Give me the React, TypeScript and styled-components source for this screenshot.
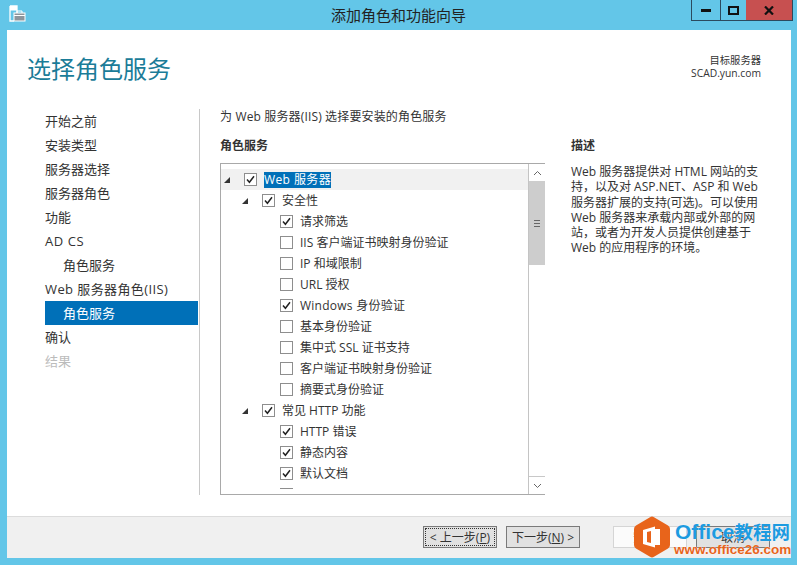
import styled, { createGlobalStyle } from "styled-components";

const cjk = `"Open Sans", "Noto Sans CJK SC", sans-serif`;

const GlobalStyle = createGlobalStyle`
    html, body {
        margin: 0;
        padding: 0;
        background: #63c6e8;
    }
    * {
        box-sizing: border-box;
    }
`;

const navItems = [
    { text: "开始之前" },
    { text: "安装类型" },
    { text: "服务器选择" },
    { text: "服务器角色" },
    { text: "功能" },
    { text: "AD CS", tracking: 0.6 },
    { text: "角色服务", sub: true },
    { text: "Web 服务器角色(IIS)", tracking: 0.4 },
    { text: "角色服务", sub: true, active: true },
    { text: "确认" },
    { text: "结果", disabled: true }
];

const treeRows = [
    { text: "Web 服务器", level: 0, parent: true, checked: true, selected: true, tracking: 0.4 },
    { text: "安全性", level: 1, parent: true, checked: true },
    { text: "请求筛选", level: 2, checked: true },
    { text: "IIS 客户端证书映射身份验证", level: 2 },
    { text: "IP 和域限制", level: 2 },
    { text: "URL 授权", level: 2 },
    { text: "Windows 身份验证", level: 2, checked: true, tracking: 0.25 },
    { text: "基本身份验证", level: 2 },
    { text: "集中式 SSL 证书支持", level: 2 },
    { text: "客户端证书映射身份验证", level: 2 },
    { text: "摘要式身份验证", level: 2 },
    { text: "常见 HTTP 功能", level: 1, parent: true, checked: true },
    { text: "HTTP 错误", level: 2, checked: true },
    { text: "静态内容", level: 2, checked: true },
    { text: "默认文档", level: 2, checked: true },
    // only the top edge of this box is still visible above the list's bottom
    { text: "", level: 2 }
];

const Page = styled.div`
    position: relative;
    width: 797px;
    height: 565px;
    overflow: hidden;
    display: flex;
    flex-direction: column;
    background: #63c6e8;
    font-family: ${cjk};
    color: #333;
`;

const TitleBar = styled.div`
    position: relative;
    height: 30px;
    flex: none;
    display: flex;
    justify-content: center;
    padding-top: 5px;
    font-size: 15px;
    line-height: 20px;
    color: #222;
`;

const AppIcon = styled.svg`
    position: absolute;
    left: 9px;
    top: 5px;
`;

const WindowControls = styled.div`
    position: absolute;
    right: 4px;
    top: 0;
    height: 21px;
    display: flex;
    border: 1px solid #2b4a5e;
    border-top: none;
`;

const ControlButton = styled.div<{ $width: number; $close?: boolean }>`
    width: ${(p) => p.$width}px;
    display: flex;
    align-items: center;
    justify-content: center;
    background: ${(p) => (p.$close ? "#c75050" : "transparent")};
    border-left: ${(p) => (p.$close ? "none" : "1px solid #2b4a5e")};

    &:first-child {
        border-left: none;
    }
`;

const Client = styled.div`
    flex: 1;
    min-height: 0;
    margin: 0 6px 7px 7px;
    display: flex;
    flex-direction: column;
    background: #fff;
`;

const Header = styled.div`
    height: 79px;
    flex: none;
    display: flex;
    justify-content: space-between;
    padding: 21px 30px 0 20px;
`;

const PageTitle = styled.h1`
    margin: 0;
    font-size: 24px;
    line-height: 36px;
    font-weight: 400;
    color: #1b7c98;
`;

const TargetServer = styled.div`
    margin-top: 3px;
    text-align: right;
    font-size: 10.3px;
    line-height: 13px;
    color: #333;
`;

const Body = styled.div`
    height: 386px;
    flex: none;
    display: flex;
`;

const Nav = styled.div`
    width: 193px;
    flex: none;
    padding: 0 1px 0 38px;
    border-right: 1px solid #c8c8c8;
    margin-right: 20px;
`;

const NavItem = styled.div<{ $sub?: boolean; $active?: boolean; $disabled?: boolean; $tracking?: number }>`
    height: 24px;
    line-height: 24px;
    font-size: 13px;
    white-space: nowrap;
    letter-spacing: ${(p) => p.$tracking ?? 0}px;
    padding-left: ${(p) => (p.$sub ? 18 : 0)}px;
    background: ${(p) => (p.$active ? "#0070b8" : "transparent")};
    color: ${(p) => (p.$active ? "#fff" : p.$disabled ? "#bcbcbc" : "#333")};
`;

const Main = styled.div`
    width: 325px;
    flex: none;
    font-size: 12px;
    margin-right: 26px;
`;

const Intro = styled.div`
    height: 24px;
    line-height: 16px;
    white-space: nowrap;
    letter-spacing: 0.15px;
`;

const SectionLabel = styled.div`
    height: 30px;
    line-height: 26px;
    font-weight: 700;
    font-size: 12px;
`;

const TreeBox = styled.div`
    height: 332px;
    display: flex;
    border: 1px solid #a9a9a9;
    background: #fff;
`;

const TreeList = styled.div`
    flex: none;
    width: 307px;
    height: 325px;
    overflow: hidden;
    padding-top: 5px;
`;

const TreeRow = styled.div<{ $level: number; $selected?: boolean }>`
    height: 21px;
    display: flex;
    align-items: center;
    padding-left: ${(p) => 3 + p.$level * 18}px;
    background: ${(p) => (p.$selected ? "#f1f1f1" : "transparent")};
    white-space: nowrap;
`;

const Expander = styled.svg`
    width: 6px;
    height: 6px;
    flex: none;
    margin-right: 14px;
`;

const ExpanderSpace = styled.div`
    width: 20px;
    flex: none;
`;

const CheckBox = styled.div`
    width: 13px;
    height: 13px;
    flex: none;
    border: 1px solid #8e8e8e;
    background: #fff;
    display: flex;
    align-items: center;
    justify-content: center;
    margin-right: 7px;
`;

const RowLabel = styled.span<{ $selected?: boolean; $tracking?: number }>`
    line-height: 16px;
    letter-spacing: ${(p) => p.$tracking ?? 0}px;
    background: ${(p) => (p.$selected ? "#0070b8" : "transparent")};
    color: ${(p) => (p.$selected ? "#fff" : "#333")};
`;

const ScrollBar = styled.div`
    width: 17px;
    flex: none;
    display: flex;
    flex-direction: column;
    background: #fff;
    border-left: 1px solid #c4c4c4;
`;

const ScrollButton = styled.div`
    height: 17px;
    flex: none;
    display: flex;
    align-items: center;
    justify-content: center;
    background: #fff;
`;

const ScrollTrack = styled.div`
    flex: 1;
    min-height: 0;
    border-bottom: 1px solid #c8c8c8;
`;

const ScrollThumb = styled.div`
    height: 84px;
    background: #cdcdcd;
    display: flex;
    align-items: center;
    justify-content: center;
`;

const Grip = styled.div`
    width: 6px;
    height: 7px;
    border-top: 1px solid #666;
    border-bottom: 1px solid #666;

    &::after {
        content: "";
        display: block;
        margin-top: 2px;
        height: 1px;
        background: #666;
    }
`;

const Aside = styled.div`
    flex: 1;
    min-width: 0;
    padding-right: 20px;
    font-size: 12px;
`;

const AsideText = styled.p`
    margin: 1px 0 0;
    line-height: 15.3px;
    color: #333;
`;

const Footer = styled.div`
    flex: 1;
    min-height: 0;
    margin-top: 21px;
    background: #f0f0f0;
    border-top: 1px solid #dcdcdc;
    display: flex;
    align-items: flex-start;
    padding: 9px 0 0 416px;
`;

const Button = styled.div<{ $focused?: boolean; $disabled?: boolean; $gap?: number }>`
    width: 74px;
    height: 22px;
    flex: none;
    margin-right: ${(p) => p.$gap ?? 9}px;
    display: flex;
    align-items: center;
    justify-content: center;
    font-size: 12px;
    white-space: pre;
    color: ${(p) => (p.$disabled ? "#999" : "#333")};
    background: ${(p) => (p.$disabled ? "#fbfbfb" : "#e1e1e1")};
    border: 1px solid ${(p) => (p.$disabled ? "#d5d5d5" : "#7a7a7a")};
    outline: ${(p) => (p.$focused ? "1px dotted #333" : "none")};
    outline-offset: -3px;

    u {
        text-underline-offset: 1px;
    }
`;

const Watermark = styled.div`
    position: absolute;
    left: 634px;
    top: 516px;
    display: flex;
    gap: 5px;
`;

const WatermarkText = styled.div`
    display: flex;
    flex-direction: column;
    font-family: "Liberation Sans", "Noto Sans CJK SC", sans-serif;
    font-weight: 700;
    white-space: nowrap;
`;

const BrandName = styled.div`
    margin-top: 5px;
    height: 22px;
    line-height: 22px;
    font-size: 21px;
    color: #1d9be0;
    text-shadow: 0 0 1px #fff;

    span {
        font-size: 18.5px;
    }
`;

const BrandUrl = styled.div`
    margin-left: -1px;
    height: 14px;
    line-height: 14px;
    font-size: 13.5px;
    color: #e8641b;
    text-shadow: 0 0 1px #fff;
`;

const CheckMark = () => (
    <svg width="9" height="9" viewBox="0 0 9 9">
        <path d="M1 4.5 L3.4 7.2 L8 1.2" fill="none" stroke="#222" strokeWidth="1.5" />
    </svg>
);

const Chevron = ({ up }: { up?: boolean }) => (
    <svg width="9" height="6" viewBox="0 0 9 6">
        <path d={up ? "M1 5 L4.5 1.5 L8 5" : "M1 1 L4.5 4.5 L8 1"} fill="none" stroke="#666" strokeWidth="1" />
    </svg>
);

const App = () => {
    return (
        <Page>
            <GlobalStyle />
            <TitleBar>
                <AppIcon width="17" height="17" viewBox="0 0 17 17">
                    <rect x="1" y="1" width="7" height="4.5" fill="#fff" />
                    <path d="M1 1 H8 V8 M1 1 V16 H5" fill="none" stroke="#fff" strokeWidth="1.3" />
                    <rect x="5" y="8" width="11" height="8" fill="#8d959c" stroke="#fff" />
                    <path d="M8 8 V6 H13 V8" fill="none" stroke="#fff" strokeWidth="1" />
                    <path d="M5 10.5 H16" stroke="#fff" strokeWidth="1" />
                </AppIcon>
                添加角色和功能向导
                <WindowControls>
                    <ControlButton $width={28}>
                        <svg width="10" height="4" viewBox="0 0 10 4">
                            <rect width="10" height="3" y="1" fill="#111" />
                        </svg>
                    </ControlButton>
                    <ControlButton $width={26}>
                        <svg width="11" height="9" viewBox="0 0 11 9">
                            <rect x="1" y="1" width="9" height="7" fill="none" stroke="#111" strokeWidth="2" />
                        </svg>
                    </ControlButton>
                    <ControlButton $width={46} $close>
                        <svg width="10" height="9" viewBox="0 0 10 9">
                            <path d="M1 0.5 L9 8.5 M9 0.5 L1 8.5" stroke="#111" strokeWidth="2.2" />
                        </svg>
                    </ControlButton>
                </WindowControls>
            </TitleBar>
            <Client>
                <Header>
                    <PageTitle>选择角色服务</PageTitle>
                    <TargetServer>
                        目标服务器
                        <br />
                        SCAD.yun.com
                    </TargetServer>
                </Header>
                <Body>
                    <Nav>
                        {navItems.map((item, idx) => {
                            return (
                                <NavItem
                                    key={idx}
                                    $sub={item.sub}
                                    $active={item.active}
                                    $disabled={item.disabled}
                                    $tracking={item.tracking}
                                >
                                    {item.text}
                                </NavItem>
                            );
                        })}
                    </Nav>
                    <Main>
                        <Intro>为 Web 服务器(IIS) 选择要安装的角色服务</Intro>
                        <SectionLabel>角色服务</SectionLabel>
                        <TreeBox>
                            <TreeList>
                                {treeRows.map((row, idx) => {
                                    return (
                                        <TreeRow key={idx} $level={row.level} $selected={row.selected}>
                                            {row.parent ? (
                                                <Expander viewBox="0 0 6 6">
                                                    <path d="M6 0 V6 H0 Z" fill="#333" />
                                                </Expander>
                                            ) : (
                                                <ExpanderSpace />
                                            )}
                                            <CheckBox>{row.checked && <CheckMark />}</CheckBox>
                                            <RowLabel $selected={row.selected} $tracking={row.tracking}>
                                                {row.text}
                                            </RowLabel>
                                        </TreeRow>
                                    );
                                })}
                            </TreeList>
                            <ScrollBar>
                                <ScrollButton>
                                    <Chevron up />
                                </ScrollButton>
                                <ScrollTrack>
                                    <ScrollThumb>
                                        <Grip />
                                    </ScrollThumb>
                                </ScrollTrack>
                                <ScrollButton>
                                    <Chevron />
                                </ScrollButton>
                            </ScrollBar>
                        </TreeBox>
                    </Main>
                    <Aside>
                        <Intro />
                        <SectionLabel>描述</SectionLabel>
                        <AsideText>
                            Web 服务器提供对 HTML 网站的支持，以及对 ASP.NET、ASP 和 Web 服务器扩展的支持(可选)。可以使用 Web 服务器来承载内部或外部的网站，或者为开发人员提供创建基于 Web 的应用程序的环境。
                        </AsideText>
                    </Aside>
                </Body>
                <Footer>
                    <Button $focused>
                        {"< 上一步("}
                        <u>P</u>
                        {")"}
                    </Button>
                    <Button $gap={33}>
                        {"下一步("}
                        <u>N</u>
                        {") >"}
                    </Button>
                    <Button $disabled>安装(I)</Button>
                    <Button>取消</Button>
                </Footer>
            </Client>
            <Watermark>
                <svg width="36" height="42" viewBox="0 0 36 42">
                    <path
                        d="M16 1.2 Q18 0 20 1.2 L34 9.5 Q36 10.7 36 13 V29 Q36 31.3 34 32.5 L20 40.8 Q18 42 16 40.8 L2 32.5 Q0 31.3 0 29 V13 Q0 10.7 2 9.5 Z"
                        fill="#e8641b"
                    />
                    <path d="M9 14 L21 10.5 V31.5 L9 28 Z M13 16 V26 L17 27 V15 Z" fill="#fff" fillRule="evenodd" />
                    <path d="M21 13 H26 V29 H21 Z" fill="#fff" />
                </svg>
                <WatermarkText>
                    <BrandName>
                        Office<span>教程网</span>
                    </BrandName>
                    <BrandUrl>www.office26.com</BrandUrl>
                </WatermarkText>
            </Watermark>
        </Page>
    );
};

export default App;
